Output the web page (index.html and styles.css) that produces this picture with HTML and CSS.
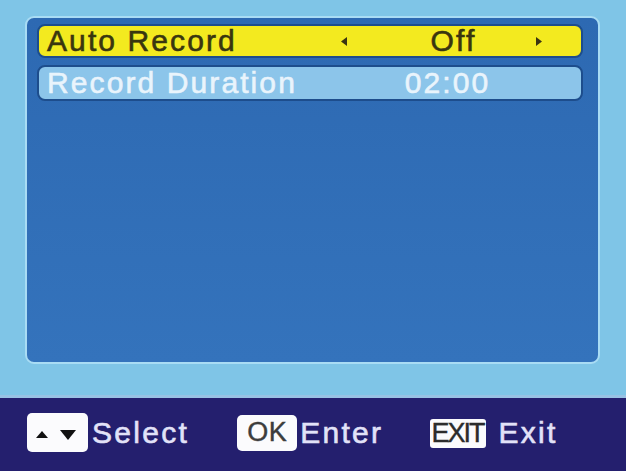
FILE: index.html
```html
<!DOCTYPE html>
<html>
<head>
<meta charset="utf-8">
<link rel="stylesheet" href="styles.css">
</head>
<body>
<div class="screen">
  <div class="stage">
    <div class="panel">
      <div class="row row-active">
        <span class="label">Auto Record</span>
        <span class="value-area">
          <svg class="arrow" width="6" height="9" viewBox="0 0 6 9"><polygon points="6,0 0,4.5 6,9" /></svg>
          <span class="value value-sel">Off</span>
          <svg class="arrow" width="6" height="9" viewBox="0 0 6 9"><polygon points="0,0 6,4.5 0,9" /></svg>
        </span>
      </div>
      <div class="row row-normal">
        <span class="label">Record Duration</span>
        <span class="value-area">
          <span class="arrow-space"></span>
          <span class="value value-dur">02:00</span>
          <span class="arrow-space"></span>
        </span>
      </div>
    </div>
  </div>
  <div class="footer">
    <div class="hint">
      <span class="key key-arrows">
        <svg width="46" height="14" viewBox="0 0 46 14">
          <polygon points="7,3 13,10 1,10" fill="#111"/>
          <polygon points="25,2 41,2 33,12" fill="#111"/>
        </svg>
      </span>
      <span class="hint-text">Select</span>
    </div>
    <div class="hint hint-ok">
      <span class="key key-ok">OK</span>
      <span class="hint-text">Enter</span>
    </div>
    <div class="hint hint-exit">
      <span class="key key-exit">EXIT</span>
      <span class="hint-text">Exit</span>
    </div>
  </div>
</div>
</body>
</html>
```

FILE: styles.css
```css
html, body {
  margin: 0;
  padding: 0;
}
body {
  width: 626px;
  height: 471px;
  overflow: hidden;
  background: #7ec4e6;
  font-family: "Liberation Sans", Arial, sans-serif;
}
.screen {
  width: 626px;
  height: 471px;
  display: flex;
  flex-direction: column;
}
.stage {
  height: 395px;
  padding: 16px 0 0 25px;
  box-sizing: border-box;
  background: #7fc5e7;
}
.panel {
  width: 575px;
  height: 348px;
  box-sizing: border-box;
  border: 2px solid #a9dcf4;
  border-radius: 9px;
  background: linear-gradient(#2d69b2, #3473bc);
  padding: 6px 15px 0 10px;
  display: flex;
  flex-direction: column;
  gap: 7px;
}
.row {
  height: 34px;
  box-sizing: border-box;
  border: 2px solid #1d4d8c;
  border-radius: 8px;
  display: flex;
  align-items: center;
  font-size: 30px;
  letter-spacing: 2.1px;
  line-height: 30px;
  -webkit-text-stroke: 0.6px currentColor;
}
.row-active {
  background: #f3ea1f;
  color: #39360f;
}
.row-normal {
  height: 36px;
  background: #8cc5ea;
  color: #e9f4fc;
}
.label {
  width: 294px;
  padding-left: 8px;
  white-space: nowrap;
  margin-top: -1px;
}
.value-area {
  width: 201px;
  display: flex;
  align-items: center;
}
.arrow {
  fill: #3a3512;
  flex: none;
}
.arrow-space {
  width: 6px;
  flex: none;
}
.value {
  flex: 1;
  text-align: center;
  margin-top: -1px;
}
.value-sel {
  padding-left: 24px;
}
.value-dur {
  padding-left: 12px;
}
.footer {
  flex: 1;
  background: #241f6e;
  border-top: 3px solid #98c2e4;
  display: flex;
  align-items: center;
  padding: 0 0 4px 27px;
}
.hint {
  display: flex;
  align-items: center;
}
.hint-ok {
  margin-left: 48px;
}
.hint-exit {
  margin-left: 47px;
}
.hint-text {
  color: #e2e2f8;
  font-size: 30px;
  letter-spacing: 2.3px;
  margin-left: 4px;
  -webkit-text-stroke: 0.6px currentColor;
}
.key {
  background: #fbfbfd;
  border-radius: 5px;
  display: flex;
  align-items: center;
  justify-content: center;
  box-sizing: border-box;
}
.key-arrows {
  width: 61px;
  height: 39px;
  padding-top: 5px;
}
.key-ok {
  width: 60px;
  height: 36px;
  color: #3d3d3d;
  font-size: 27px;
  letter-spacing: 0.5px;
  -webkit-text-stroke: 0.4px currentColor;
}
.hint-ok .hint-text {
  margin-left: 3px;
}
.key-exit {
  width: 56px;
  height: 29px;
  border-radius: 3px;
  color: #2c2c2c;
  font-size: 27px;
  letter-spacing: -2px;
  padding-right: 2px;
  margin-top: 1px;
  -webkit-text-stroke: 0.4px currentColor;
}
.hint-exit .hint-text {
  margin-left: 12px;
}
```
